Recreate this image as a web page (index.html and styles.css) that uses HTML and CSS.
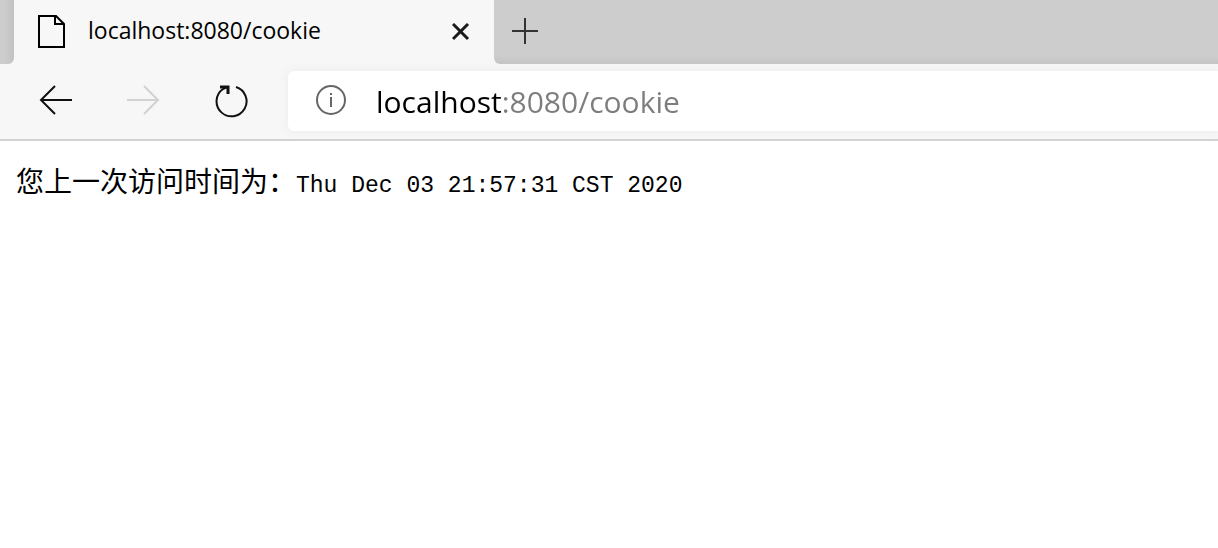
FILE: index.html
```
<!DOCTYPE html>
<html lang="zh-CN">
<head>
  <meta charset="UTF-8">
  <meta name="viewport" content="width=device-width, initial-scale=1.0">
  <title>localhost:8080/cookie</title>
  <link rel="stylesheet" href="styles.css">
</head>
<body>
  <header class="browser">
    <div class="tab-bar">
      <div class="tab">
        <svg class="page-icon" width="28" height="34" viewBox="0 0 28 34" fill="none" stroke="#000" stroke-width="2">
          <path d="M1 1H18L26 9V32H1Z"/>
          <path d="M17 1V9H26"/>
        </svg>
        <span class="tab-title">localhost:8080/cookie</span>
        <button class="tab-close" type="button" aria-label="关闭标签页">
          <svg width="18" height="18" viewBox="0 0 18 18" stroke="#1a1a1a" stroke-width="3">
            <path d="M1 1L16 16M16 1L1 16"/>
          </svg>
        </button>
      </div>
      <button class="new-tab" type="button" aria-label="新建标签页">
        <svg width="26" height="26" viewBox="0 0 26 26" stroke="#333" stroke-width="2">
          <path d="M0 13H26M13 0V26"/>
        </svg>
      </button>
    </div>

    <div class="toolbar">
      <button class="nav-button" type="button" aria-label="后退">
        <svg width="34" height="32" viewBox="0 0 34 32" fill="none" stroke="#111" stroke-width="2">
          <path d="M34 15H3M17 1L3 15L17 29"/>
        </svg>
      </button>
      <button class="nav-button" type="button" aria-label="前进" disabled>
        <svg width="34" height="32" viewBox="0 0 34 32" fill="none" stroke="#d2d2d2" stroke-width="2">
          <path d="M1 15H32M18 1L32 15L18 29"/>
        </svg>
      </button>
      <button class="nav-button" type="button" aria-label="刷新">
        <svg width="34" height="34" viewBox="0 0 34 34" fill="none" stroke="#111" stroke-width="2">
          <path d="M22 3A15 15 0 1 1 9 5L13 3"/>
          <path d="M6 3H14V10" stroke-width="3"/>
        </svg>
      </button>
      <div class="address">
        <svg width="32" height="32" viewBox="0 0 32 32" fill="none" stroke="#666" stroke-width="2">
          <circle cx="15" cy="15" r="14"/>
          <path d="M15 12V22M15 8V10"/>
        </svg>
        <input class="address-input" type="text" value="localhost:8080/cookie" aria-label="地址栏" spellcheck="false">
      </div>
    </div>
  </header>

  <main class="content">您上一次访问时间为：<span class="time">Thu Dec 03 21:57:31 CST 2020</span></main>
</body>
</html>
```
FILE: styles.css
```
* {
  box-sizing: border-box;
}
body {
  margin: 0;
  background: #fff;
  color: #000;
  font-family: "Open Sans", "Noto Sans CJK SC", sans-serif;
}
svg {
  display: block;
}
button {
  display: flex;
  align-items: center;
  justify-content: center;
  padding: 0;
  border: none;
  background: none;
}
.browser {
  background: #f7f7f7;
  border-bottom: 2px solid #d2d2d2;
}
.tab-bar {
  display: flex;
  height: 64px;
}
.tab-bar::before {
  content: "";
  width: 14px;
  background: linear-gradient(to right, #cdcdcd 4px, #c2c2c2);
  border-bottom-right-radius: 6px;
}
.tab {
  display: flex;
  align-items: center;
  width: 480px;
  padding: 0 24px;
}
.page-icon {
  flex: none;
}
.tab-title {
  flex: 1;
  margin-left: 22px;
  padding-bottom: 4px;
  font-size: 23px;
}
.new-tab {
  flex: 1;
  justify-content: flex-start;
  padding: 0 18px 2px;
  background: linear-gradient(#cdcdcd 56px, #c3c3c3);
  border-bottom-left-radius: 6px;
}
.toolbar {
  display: flex;
  align-items: center;
  padding: 7px 0 8px 38px;
}
.nav-button {
  flex: none;
  width: 34px;
  margin-right: 54px;
}
.address {
  flex: 1;
  display: flex;
  align-items: center;
  height: 60px;
  margin-left: -14px;
  padding-left: 28px;
  background: #fff;
  border-radius: 6px 0 0 6px;
  box-shadow: 0 0 10px #eaeaea;
}
.address-input {
  flex: 1;
  min-width: 0;
  margin-left: 28px;
  padding: 0;
  border: none;
  outline: none;
  font-family: inherit;
  font-size: 30px;
  /* host in black, port and path in grey */
  color: transparent;
  background: linear-gradient(to right, #000 128px, #7d7d7d 128px);
  -webkit-background-clip: text;
  background-clip: text;
}
.content {
  padding: 24px 16px;
  font-family: "Liberation Mono", "Noto Sans CJK SC", monospace;
  font-size: 28px;
  line-height: 40px;
}
.time {
  font-size: 23px;
}
```
